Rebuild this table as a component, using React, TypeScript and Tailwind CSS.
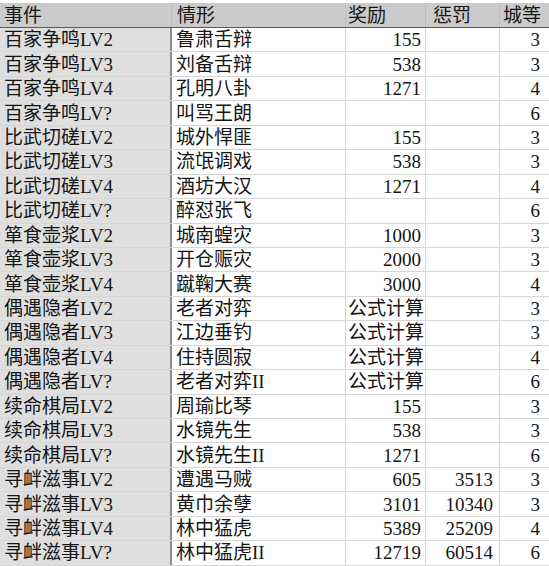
import React from "react";

const rows: [string, string, string, string, string][] = [
  ["百家争鸣LV2", "鲁肃舌辩", "155", "", "3"],
  ["百家争鸣LV3", "刘备舌辩", "538", "", "3"],
  ["百家争鸣LV4", "孔明八卦", "1271", "", "4"],
  ["百家争鸣LV?", "叫骂王朗", "", "", "6"],
  ["比武切磋LV2", "城外悍匪", "155", "", "3"],
  ["比武切磋LV3", "流氓调戏", "538", "", "3"],
  ["比武切磋LV4", "酒坊大汉", "1271", "", "4"],
  ["比武切磋LV?", "醉怼张飞", "", "", "6"],
  ["箪食壶浆LV2", "城南蝗灾", "1000", "", "3"],
  ["箪食壶浆LV3", "开仓赈灾", "2000", "", "3"],
  ["箪食壶浆LV4", "蹴鞠大赛", "3000", "", "4"],
  ["偶遇隐者LV2", "老者对弈", "公式计算", "", "3"],
  ["偶遇隐者LV3", "江边垂钓", "公式计算", "", "3"],
  ["偶遇隐者LV4", "住持圆寂", "公式计算", "", "4"],
  ["偶遇隐者LV?", "老者对弈II", "公式计算", "", "6"],
  ["续命棋局LV2", "周瑜比琴", "155", "", "3"],
  ["续命棋局LV3", "水镜先生", "538", "", "3"],
  ["续命棋局LV?", "水镜先生II", "1271", "", "6"],
  ["寻衅滋事LV2", "遭遇马贼", "605", "3513", "3"],
  ["寻衅滋事LV3", "黄巾余孽", "3101", "10340", "3"],
  ["寻衅滋事LV4", "林中猛虎", "5389", "25209", "4"],
  ["寻衅滋事LV?", "林中猛虎II", "12719", "60514", "6"],
];

const cols = "grid grid-cols-[172px_174px_80px_74px_49px]";

export default function App() {
  return (
    <div
      className="w-[549px] h-[566px] overflow-hidden bg-white pt-[3px] text-[19px] leading-none whitespace-nowrap text-[#151515]"
      style={{ fontFamily: '"Liberation Serif", "Noto Sans CJK SC", serif' }}
    >
      {/* header */}
      <div className={`${cols} h-[25px] bg-[#cbcbcb] border-b-[1.5px] border-[#5a5a5a]`}>
        <div className="flex items-center pl-[4px] border-r border-[#bdbdbd]">事件</div>
        <div className="flex items-center pl-[5px] border-r border-[#bdbdbd]">情形</div>
        <div className="flex items-center pl-[2px] border-r border-[#bdbdbd]">奖励</div>
        <div className="flex items-center pl-[7px] border-r border-[#bdbdbd]">惩罚</div>
        <div className="flex items-center pl-[3px]">城等</div>
      </div>

      {rows.map(([ev, sit, reward, penalty, level], i) => {
        const isNum = /^\d*$/.test(reward);
        return (
          <div key={i} className={`${cols} h-[24.45px] border-b border-[#d6d6d6]`}>
            <div className="flex items-center pl-[4px] bg-[#dfdfdf] border-r-2 border-[#8e8e8e]">{ev}</div>
            <div className="flex items-center pl-[4px] border-r border-[#d6d6d6]">{sit}</div>
            <div
              className={`flex items-center justify-end border-r border-[#d6d6d6] ${
                isNum ? "pr-[4px]" : "pr-[1px]"
              }`}
            >
              {reward}
            </div>
            <div className="flex items-center justify-end pr-[6px] border-r border-[#d6d6d6]">{penalty}</div>
            <div className="flex items-center justify-end pr-[9px]">{level}</div>
          </div>
        );
      })}
    </div>
  );
}
